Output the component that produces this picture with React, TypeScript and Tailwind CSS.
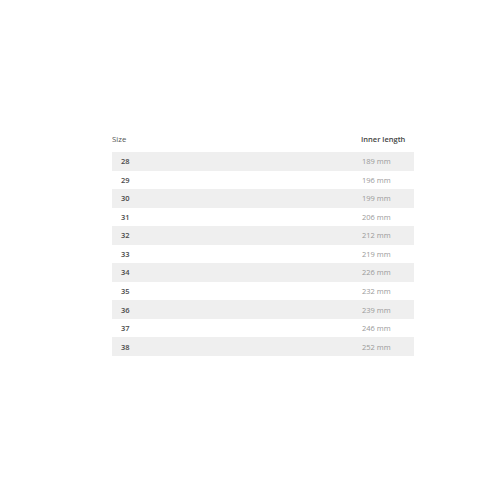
const rows: [string, string][] = [
  ['28', '189 mm'],
  ['29', '196 mm'],
  ['30', '199 mm'],
  ['31', '206 mm'],
  ['32', '212 mm'],
  ['33', '219 mm'],
  ['34', '226 mm'],
  ['35', '232 mm'],
  ['36', '239 mm'],
  ['37', '246 mm'],
  ['38', '252 mm'],
];

export default function App() {
  return (
    <div className="min-h-[495px] w-[495px] bg-white pt-[130px] pl-[112px] font-['Open_Sans',sans-serif] text-[7.5px]">
      <div className="w-[302px]">
        {/* en-tête */}
        <div className="flex h-[22px] items-center pb-[4px] pt-[2px]">
          <div className="flex-1 text-[7.8px] text-[#555]">Size</div>
          <div className="w-[53px] whitespace-nowrap font-semibold text-[#444]">Inner length</div>
        </div>
        {rows.map(([size, len], i) => (
          <div
            key={size}
            className={`flex h-[18.55px] items-center pt-[1px] ${i % 2 === 0 ? 'bg-[#efefef]' : 'bg-white'}`}
          >
            <div className="flex-1 pl-[9px] font-semibold text-[#4a4a4a]">{size}</div>
            <div className="w-[52px] whitespace-nowrap text-[#999]">{len}</div>
          </div>
        ))}
      </div>
    </div>
  );
}
